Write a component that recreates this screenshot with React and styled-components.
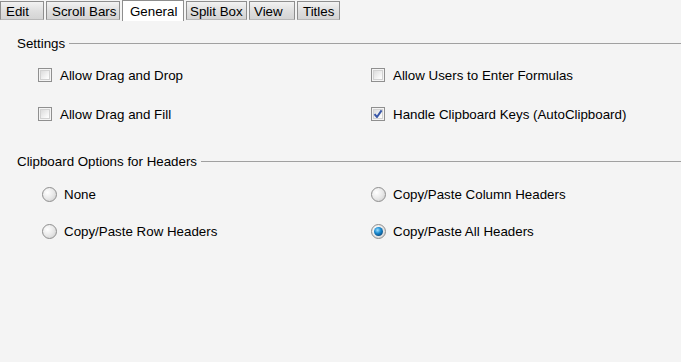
import styled, { createGlobalStyle } from "styled-components";

const Global = createGlobalStyle`
  body {
    margin: 0;
    background: #f4f4f4;
    font-family: "Liberation Sans", Arial, sans-serif;
    font-size: 13.33px;
    color: #000;
  }
`;

const Window = styled.div`
  width: 681px;
  height: 362px;
  background: #f4f4f4;
  overflow: hidden;
`;

const TabStrip = styled.div`
  display: flex;
  align-items: flex-end;
  gap: 2px;
  height: 21px;
`;

const Tab = styled.div`
  box-sizing: border-box;
  width: ${(p) => p.$w}px;
  height: ${(p) => (p.$active ? 21 : 19)}px;
  margin-bottom: ${(p) => (p.$active ? 0 : 1)}px;
  display: flex;
  align-items: center;
  padding: ${(p) => (p.$active ? 0 : 2)}px 0 0 ${(p) => p.$pad}px;
  border: 1px solid #8e8e8e;
  border-bottom: ${(p) => (p.$active ? "none" : "1px solid #b8b8b8")};
  background: ${(p) =>
    p.$active ? "#ffffff" : "linear-gradient(#f2f2f2, #dedede 55%, #d4d4d4)"};
  white-space: nowrap;
`;

const Panel = styled.div`
  padding: 14px 0 0 17px;
`;

const Header = styled.div`
  display: flex;
  align-items: center;
  height: 16px;
  gap: 4px;
  margin-top: ${(p) => p.$top || 0}px;

  &::after {
    content: "";
    flex: 1;
    border-top: 1px solid #a0a0a0;
  }
`;

const OptionGrid = styled.div`
  display: grid;
  grid-template-columns: ${(p) => p.$left}px 1fr;
  row-gap: ${(p) => p.$rowGap}px;
  padding-left: ${(p) => p.$indent}px;
  margin-top: ${(p) => p.$top}px;
`;

const Option = styled.label`
  display: flex;
  align-items: center;
  height: 20px;
  gap: ${(p) => p.$gap || 8}px;
  white-space: nowrap;
`;

const CheckWrap = styled.span`
  position: relative;
  display: flex;
`;

const CheckBox = styled.span`
  box-sizing: border-box;
  width: 14px;
  height: 14px;
  border: 1px solid #8f8f8f;
  background: #f4f4f4;
  padding: 1px;
  display: flex;

  &::before {
    content: "";
    flex: 1;
    border: 1px solid #d2d2d2;
    background: linear-gradient(135deg, #dcdcdc, #f6f6f6 70%, #ffffff);
  }
`;

const Check = styled.svg`
  position: absolute;
  left: 2px;
  top: 2px;
`;

const Radio = styled.span`
  box-sizing: border-box;
  width: 15px;
  height: 15px;
  border-radius: 50%;
  border: 1px solid #8e8e8e;
  background: radial-gradient(circle at 35% 35%, #ffffff, #e6e6e6 55%, #c8c8c8);
  display: flex;
  align-items: center;
  justify-content: center;

  &::before {
    content: "";
    display: ${(p) => (p.$on ? "block" : "none")};
    width: 9px;
    height: 9px;
    border-radius: 50%;
    background: radial-gradient(circle at 40% 35%, #9fe0ff, #1a8ad0 40%, #0a4f86 75%, #083a66);
  }
`;

function CheckOption({ checked, children }) {
  return (
    <Option>
      <CheckWrap>
        <CheckBox />
        {checked && (
          <Check width="10" height="10" viewBox="0 0 10 10">
            <path d="M1.5 5.2 L4 8 L8.6 1.4" fill="none" stroke="#3a58a8" strokeWidth="2" strokeLinejoin="round" />
          </Check>
        )}
      </CheckWrap>
      {children}
    </Option>
  );
}

function RadioOption({ on, children }) {
  return (
    <Option $gap={7}>
      <Radio $on={on} />
      {children}
    </Option>
  );
}

const tabs = [
  { name: "Edit", w: 44, pad: 5 },
  { name: "Scroll Bars", w: 74, pad: 5 },
  { name: "General", w: 62, pad: 7, active: true },
  { name: "Split Box", w: 61, pad: 3 },
  { name: "View", w: 46, pad: 4 },
  { name: "Titles", w: 43, pad: 5 },
];

export default function App() {
  return (
    <Window>
      <Global />
      <TabStrip>
        {tabs.map((t) => (
          <Tab key={t.name} $w={t.w} $pad={t.pad} $active={t.active}>
            {t.name}
          </Tab>
        ))}
      </TabStrip>
      <Panel>
        <Header>Settings</Header>
        <OptionGrid $left={333} $rowGap={19} $indent={21} $top={14}>
          <CheckOption>Allow Drag and Drop</CheckOption>
          <CheckOption>Allow Users to Enter Formulas</CheckOption>
          <CheckOption>Allow Drag and Fill</CheckOption>
          <CheckOption checked>Handle Clipboard Keys (AutoClipboard)</CheckOption>
        </OptionGrid>
        <Header $top={29}>Clipboard Options for Headers</Header>
        <OptionGrid $left={329} $rowGap={17} $indent={25} $top={15}>
          <RadioOption>None</RadioOption>
          <RadioOption>Copy/Paste Column Headers</RadioOption>
          <RadioOption>Copy/Paste Row Headers</RadioOption>
          <RadioOption on>Copy/Paste All Headers</RadioOption>
        </OptionGrid>
      </Panel>
    </Window>
  );
}
